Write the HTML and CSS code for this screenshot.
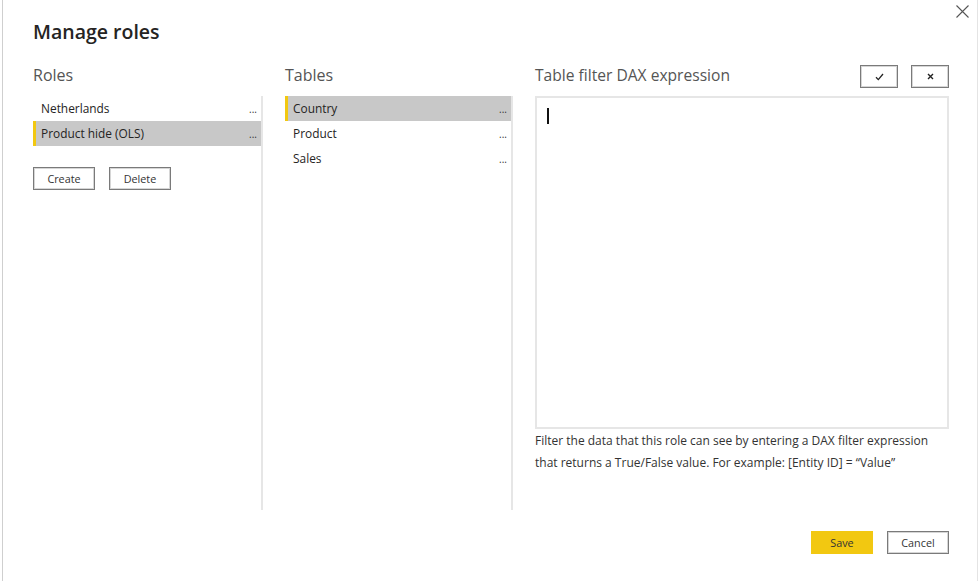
FILE: index.html
```html
<!DOCTYPE html>
<html>
<head>
<meta charset="utf-8">
<link rel="stylesheet" href="styles.css">
</head>
<body>
<div class="dialog">
  <button class="close" aria-label="Close">
    <svg width="13" height="13" viewBox="0 0 13 13"><path d="M0.5 0.5L12.5 12.5M12.5 0.5L0.5 12.5" stroke="#555" stroke-width="1.1" fill="none"/></svg>
  </button>
  <h1 class="title">Manage roles</h1>
  <div class="columns">
    <section class="col col-roles">
      <h2 class="col-head">Roles</h2>
      <div class="panel">
        <ul class="list">
          <li class="item"><span>Netherlands</span><span class="more">...</span></li>
          <li class="item selected"><span>Product hide (OLS)</span><span class="more">...</span></li>
        </ul>
        <div class="actions">
          <button class="btn">Create</button>
          <button class="btn">Delete</button>
        </div>
      </div>
    </section>
    <section class="col col-tables">
      <h2 class="col-head">Tables</h2>
      <div class="panel">
        <ul class="list">
          <li class="item selected"><span>Country</span><span class="more">...</span></li>
          <li class="item"><span>Product</span><span class="more">...</span></li>
          <li class="item"><span>Sales</span><span class="more">...</span></li>
        </ul>
      </div>
    </section>
    <section class="col col-dax">
      <div class="dax-head">
        <h2 class="col-head">Table filter DAX expression</h2>
        <div class="dax-tools">
          <button class="btn tool" aria-label="Apply">
            <svg width="9" height="8" viewBox="0 0 9 8"><path d="M1 4.3L3.3 6.6L8 1" stroke="#222" stroke-width="1.3" fill="none"/></svg>
          </button>
          <button class="btn tool" aria-label="Discard">
            <svg width="7" height="7" viewBox="0 0 7 7"><path d="M1 1L6 6M6 1L1 6" stroke="#222" stroke-width="1.4" fill="none"/></svg>
          </button>
        </div>
      </div>
      <div class="editor"><span class="caret"></span></div>
      <p class="help">Filter the data that this role can see by entering a DAX filter expression that returns a True/False value. For example: [Entity ID] = “Value”</p>
    </section>
  </div>
  <div class="footer">
    <button class="btn primary">Save</button>
    <button class="btn">Cancel</button>
  </div>
</div>
</body>
</html>
```
FILE: styles.css
```css
* { box-sizing: border-box; }
html, body { margin: 0; padding: 0; background: #fff; }
body {
  font-family: "Open Sans", "Noto Sans", "Liberation Sans", sans-serif;
  color: #252423;
}
.dialog {
  position: relative;
  width: 976px;
  height: 581px;
  margin-left: 2px;
  border-left: 1px solid #cfcfcf;
  border-right: 1px solid #e4e4e4;
  padding: 18px 0 0 30px;
}
.close {
  position: absolute;
  top: 5px;
  right: 7px;
  width: 14px;
  height: 14px;
  padding: 0;
  border: 0;
  background: none;
  display: flex;
}
.title {
  margin: 0;
  font-size: 19.5px;
  line-height: 28px;
  font-weight: 600;
  color: #252423;
}
.columns {
  display: flex;
  margin-top: 17px;
  height: 447px;
}
.col { display: flex; flex-direction: column; }
.col-head {
  margin: 0;
  font-size: 16px;
  line-height: 24px;
  font-weight: 400;
  color: #555;
  height: 33px;
  padding-top: 0;
}
.col-roles { width: 230px; }
.col-tables { width: 228px; margin-left: 22px; }
.col-dax { width: 414px; margin-left: 22px; }
.panel {
  flex: 1;
  border-right: 2px solid #e6e6e6;
}
.list { list-style: none; margin: 0; padding: 0; }
.item {
  display: flex;
  justify-content: space-between;
  align-items: center;
  height: 25px;
  padding: 0 4px 2px 8px;
  font-size: 11.9px;
  color: #252423;
  border-left: 3px solid transparent;
}
.item.selected {
  background: #c8c8c8;
  border-left-color: #f2c811;
}
.item span:first-child { margin-left: -3px; }
.more { font-size: 10px; color: #333; letter-spacing: 0; padding-top: 2px; }
.actions {
  display: flex;
  gap: 14px;
  margin-top: 21px;
}
.btn {
  font-family: inherit;
  width: 62px;
  height: 23px;
  padding: 0;
  background: #fff;
  border: 1px solid #7a7a7a;
  box-shadow: inset 0 0 0 1px #d6d6d6;
  font-size: 10.8px;
  color: #333;
  display: flex;
  align-items: center;
  justify-content: center;
}
.dax-head {
  display: flex;
  justify-content: space-between;
  align-items: flex-start;
}
.col-dax .col-head { font-size: 15.6px; }
.dax-tools { display: flex; gap: 13px; padding-top: 2px; }
.tool { width: 38px; height: 23px; }
.editor {
  height: 333px;
  border: 2px solid #e6e6e6;
  padding: 10px 0 0 10px;
}
.caret {
  display: block;
  width: 1.5px;
  height: 16px;
  background: #111;
}
.help {
  margin: 0;
  padding: 1px 20px 0 0;
  font-size: 12px;
  line-height: 22px;
  color: #333;
}
.footer {
  display: flex;
  justify-content: flex-end;
  gap: 14px;
  padding-right: 28px;
  margin-top: 21px;
}
.btn.primary {
  background: #f2c811;
  border-color: #f2c811;
  box-shadow: none;
}
```
